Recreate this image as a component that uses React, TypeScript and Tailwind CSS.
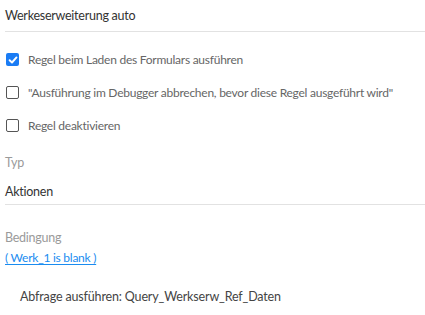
function Check({ checked }: { checked?: boolean }) {
  if (checked) {
    return (
      <span className="w-[13px] h-[13px] rounded-[2px] bg-[#1a7cf4] flex items-center justify-center shrink-0">
        <svg width="10" height="10" viewBox="0 0 10 10">
          <path d="M1.6 5.2 L4 7.5 L8.5 2.4" stroke="white" strokeWidth="1.9" fill="none" strokeLinecap="round" strokeLinejoin="round" />
        </svg>
      </span>
    );
  }
  return <span className="w-[13px] h-[13px] rounded-[2px] border border-[#555] bg-white shrink-0" />;
}

function Row({ checked, label }: { checked?: boolean; label: string }) {
  return (
    <div className="h-[33px] flex items-center">
      <Check checked={checked} />
      <span className="ml-[9px] text-[#666] whitespace-nowrap pt-[1px]">{label}</span>
    </div>
  );
}

export default function App() {
  return (
    <div
      className="w-[425px] h-[315px] bg-white pl-[5px] text-[12px] tracking-[-0.25px] leading-none"
      style={{ fontFamily: "Lato, sans-serif" }}
    >
      <div className="h-[32px] border-b border-[#e2e2e2] flex items-center pt-[2px] text-[#333] text-[12.5px]">
        Werkeserweiterung auto
      </div>
      <div className="pt-[11px] pl-[1px]">
        <Row checked label="Regel beim Laden des Formulars ausführen" />
        <Row label={'"Ausführung im Debugger abbrechen, bevor diese Regel ausgeführt wird"'} />
        <Row label="Regel deaktivieren" />
      </div>
      <div className="h-[34px] flex items-center pt-[9px] text-[#9a9a9a] text-[12.5px]">Typ</div>
      <div className="h-[29px] border-b border-[#e2e2e2] flex items-center pt-[5px] text-[#333] text-[12.5px]">Aktionen</div>
      <div className="h-[41px] flex items-center pt-[25px] text-[#9a9a9a] text-[12.5px]">Bedingung</div>
      <div className="h-[20px] flex items-center pt-[3px]">
        <span className="text-[#1a8cf0] underline underline-offset-2">( Werk_1 is blank )</span>
      </div>
      <div className="h-[60px] flex items-center pt-[2px] pl-[15px] text-[#444] text-[12.5px] tracking-[-0.15px]">
        Abfrage ausführen: Query_Werkserw_Ref_Daten
      </div>
    </div>
  );
}
